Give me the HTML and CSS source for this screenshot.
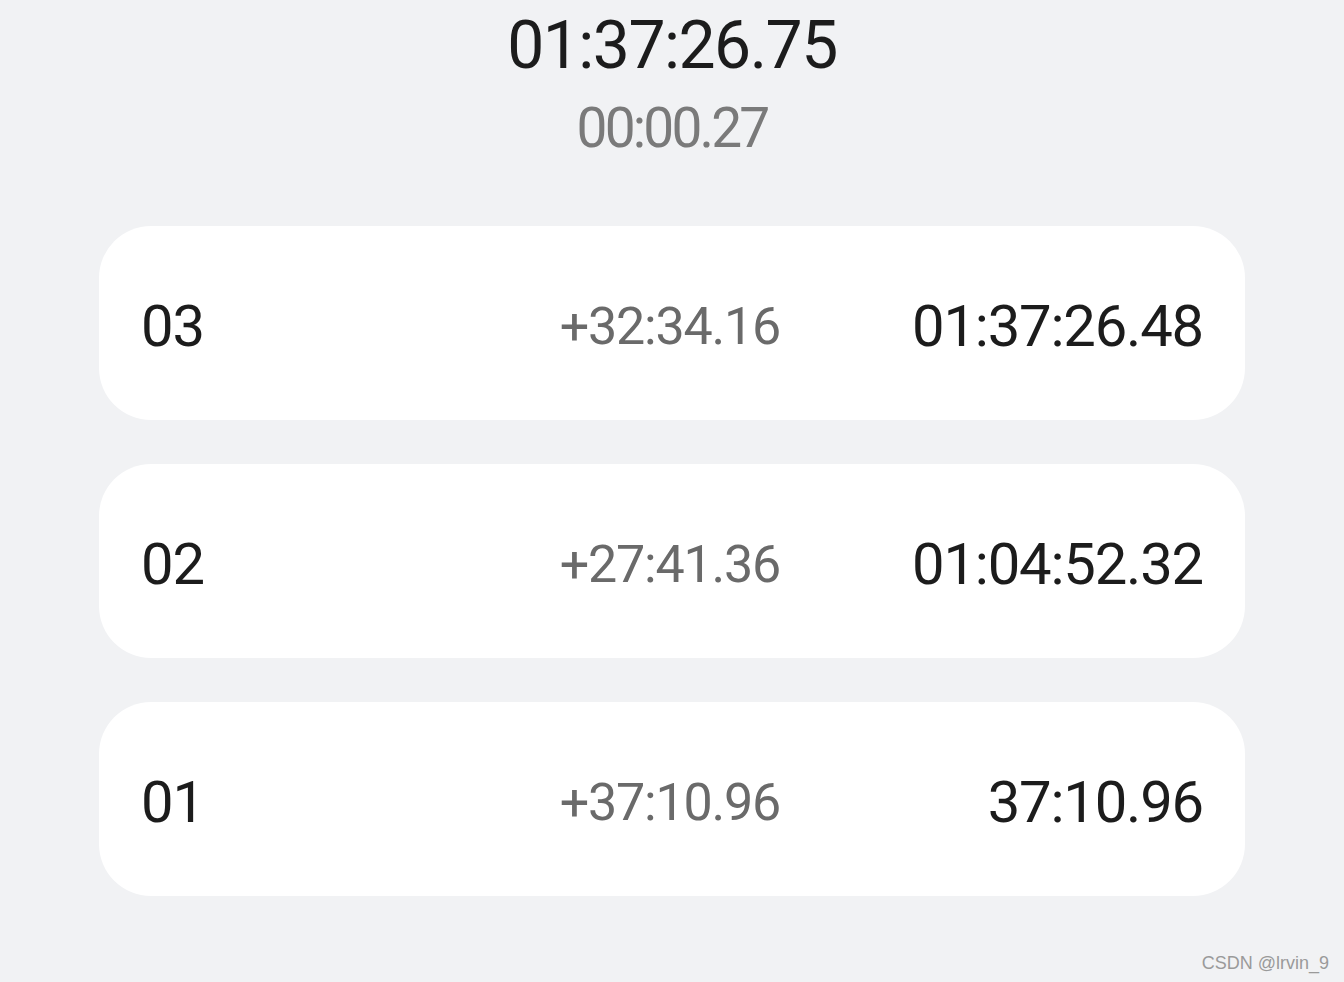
FILE: index.html
```html
<!DOCTYPE html>
<html lang="en">
<head>
<meta charset="utf-8">
<title>Stopwatch</title>
<link rel="stylesheet" href="styles.css">
</head>
<body>
<main class="page">
  <header class="timer">
    <div class="timer-main">01:37:26.75</div>
    <div class="timer-lap">00:00.27</div>
  </header>
  <section class="laps">
    <div class="lap">
      <span class="lap-no">03</span>
      <span class="lap-diff">+32:34.16</span>
      <span class="lap-total">01:37:26.48</span>
    </div>
    <div class="lap">
      <span class="lap-no">02</span>
      <span class="lap-diff">+27:41.36</span>
      <span class="lap-total">01:04:52.32</span>
    </div>
    <div class="lap">
      <span class="lap-no">01</span>
      <span class="lap-diff">+37:10.96</span>
      <span class="lap-total">37:10.96</span>
    </div>
  </section>
  <div class="watermark">CSDN @lrvin_9</div>
</main>
</body>
</html>
```
FILE: styles.css
```css
html, body {
  margin: 0;
  padding: 0;
}
body {
  background: #f1f2f4;
  font-family: Roboto, "Noto Sans", sans-serif;
  width: 1344px;
  height: 982px;
  overflow: hidden;
}
.page {
  position: relative;
  height: 982px;
  display: flex;
  flex-direction: column;
  align-items: center;
}
.timer {
  display: flex;
  flex-direction: column;
  align-items: center;
  padding-top: 6px;
}
.timer-main {
  font-size: 66px;
  line-height: 80px;
  color: #1c1c1c;
  letter-spacing: -1.5px;
}
.timer-lap {
  font-size: 55px;
  line-height: 64px;
  color: #7a7a7a;
  letter-spacing: -2.8px;
  margin-top: 10px;
}
.laps {
  margin-top: 66px;
  display: flex;
  flex-direction: column;
  gap: 44px;
}
.lap {
  width: 1146px;
  height: 194px;
  box-sizing: border-box;
  padding: 6px 42px 0;
  background: #ffffff;
  border-radius: 52px;
  display: grid;
  grid-template-columns: 1fr auto 423px;
  align-items: center;
  font-size: 58px;
  letter-spacing: -1.2px;
}
.lap-no {
  color: #1c1c1c;
}
.lap-diff {
  color: #6a6a6a;
  text-align: right;
  font-size: 52px;
  letter-spacing: -1.2px;
}
.lap-total {
  color: #1c1c1c;
  text-align: right;
}
.watermark {
  position: absolute;
  right: 15px;
  bottom: 8px;
  font-family: "Liberation Sans", Arial, sans-serif;
  font-size: 18px;
  color: #9a9a9a;
}
```
